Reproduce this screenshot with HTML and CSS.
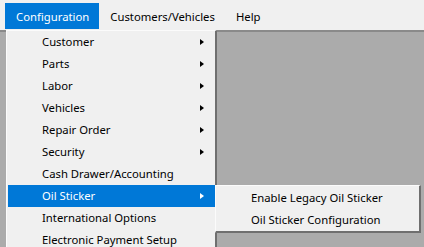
FILE: index.html
```html
<!DOCTYPE html>
<html lang="en">
<head>
  <meta charset="UTF-8">
  <title>Configuration</title>
  <link rel="stylesheet" href="styles.css">
</head>
<body>

  <div class="menubar">
    <span class="top-item active">Configuration</span>
    <span class="top-item">Customers/Vehicles</span>
    <span class="top-item">Help</span>
  </div>

  <div class="client"></div>

  <div class="dropdown">
    <div class="item sub">Customer</div>
    <div class="item sub">Parts</div>
    <div class="item sub">Labor</div>
    <div class="item sub">Vehicles</div>
    <div class="item sub">Repair Order</div>
    <div class="item sub">Security</div>
    <div class="item">Cash Drawer/Accounting</div>
    <div class="item sub selected">Oil Sticker</div>
    <div class="item">International Options</div>
    <div class="item">Electronic Payment Setup</div>
  </div>

  <div class="dropdown submenu">
    <div class="item">Enable Legacy Oil Sticker</div>
    <div class="item">Oil Sticker Configuration</div>
  </div>

</body>
</html>
```

FILE: styles.css
```css
body {
  margin: 0;
  padding: 0;
  height: 100vh;
  overflow: hidden;
  display: flex;
  flex-direction: column;
  background-color: #ababab;
  font-family: 'Noto Sans', sans-serif;
  font-size: 11.3px;
  color: #000000;
  position: relative;
}

.menubar {
  height: 30px;
  background-color: #f0f0f0;
  display: flex;
  align-items: stretch;
  padding: 3px 0 1px 5px;
  box-sizing: border-box;
}

.top-item {
  display: flex;
  align-items: center;
  padding: 0 10px 0 11px;
}

.top-item.active {
  background-color: #0078d7;
  color: #ffffff;
}

.client {
  flex: 1;
  border-top: 2px solid #8a8a8a;
  background-color: #ababab;
}

/* menus lie over the client area */
.dropdown {
  position: absolute;
  left: 6px;
  top: 30px;
  width: 207px;
  background-color: #f0f0f0;
  border-left: 1px solid #fbfbfb;
  border-top: 1px solid #fbfbfb;
  border-right: 2px solid #6f6f6f;
  padding: 0 0 0 1px;
}

.item {
  height: 22px;
  line-height: 22px;
  padding-left: 34px;
  position: relative;
  white-space: nowrap;
}

.item.sub::after {
  content: "";
  position: absolute;
  left: 192px;
  top: 8px;
  width: 0;
  height: 0;
  border-left: 4px solid #000000;
  border-top: 3.5px solid transparent;
  border-bottom: 3.5px solid transparent;
}

.item.selected {
  background-color: #0078d7;
  color: #ffffff;
}

.item.selected::after {
  border-left-color: #ffffff;
}

.submenu {
  left: 215px;
  top: 185px;
  width: 203px;
  padding: 1px 0 0 0;
  border-bottom: 2px solid #6f6f6f;
}

.submenu .item {
  padding-left: 35px;
}
```
